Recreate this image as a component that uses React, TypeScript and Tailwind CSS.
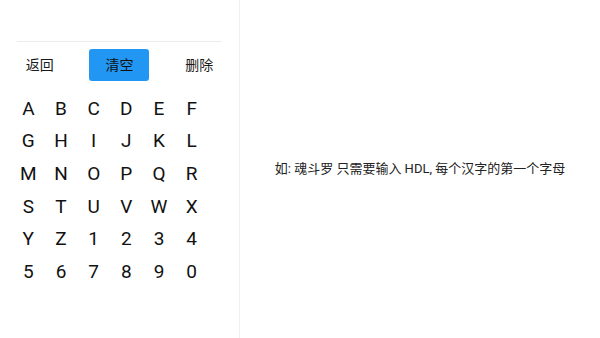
import React from "react";

const keys: string[] = "ABCDEFGHIJKLMNOPQRSTUVWXYZ1234567890".split("");

const font = "font-['Roboto','Noto_Sans_CJK_SC',sans-serif]";

export default function App() {
  return (
    <div className={`flex h-[338px] w-[600px] bg-white ${font}`}>
      <div className="flex h-full w-[240px] flex-col border-r border-[#f0f0f0] pt-[41px]">
        <div className="ml-[17px] h-px w-[205px] bg-[#ececec]" />
        <div className="mt-[7px] flex justify-around">
          <button className="h-[32px] w-[60px] text-[14px] text-[#1a1a1a]">返回</button>
          <button className="h-[32px] w-[60px] rounded-[3px] bg-[#2196f3] text-[14px] text-[#111]">
            清空
          </button>
          <button className="h-[32px] w-[60px] text-[14px] text-[#1a1a1a]">删除</button>
        </div>
        <div className="ml-[12px] mt-[11.5px] grid w-[196px] grid-cols-6">
          {keys.map((k) => (
            <div
              key={k}
              className="flex h-[32.7px] items-center justify-center text-[19px] text-[#111]"
            >
              {k}
            </div>
          ))}
        </div>
      </div>
      <div className="flex flex-1 items-center justify-center">
        <p className="text-[13px] text-[#222]">
          如: 魂斗罗 只需要输入 HDL, 每个汉字的第一个字母
        </p>
      </div>
    </div>
  );
}
